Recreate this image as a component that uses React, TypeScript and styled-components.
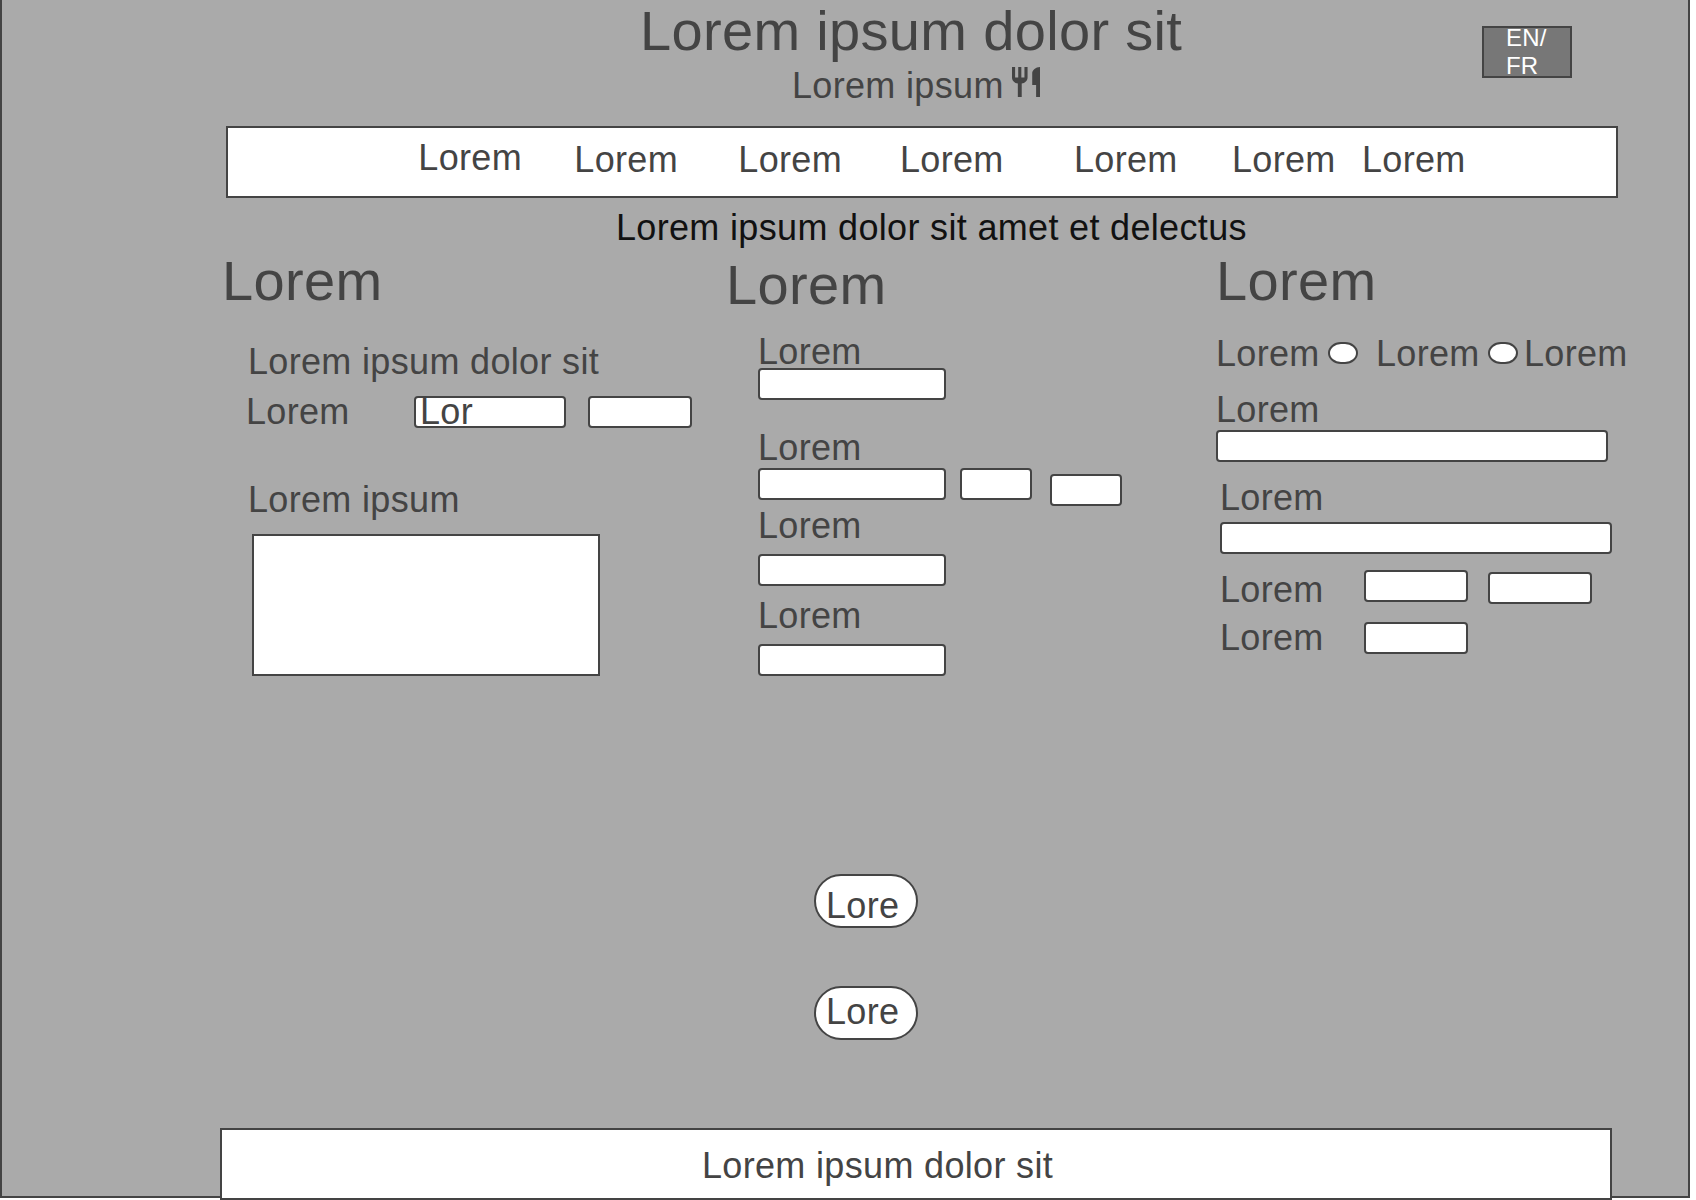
import React from "react";
import styled, { createGlobalStyle } from "styled-components";

const INK = "#444444";

const GlobalStyle = createGlobalStyle`
  *, *::before, *::after { box-sizing: border-box; }
  body {
    margin: 0;
    min-height: 1200px;
    background: #ffffff;
    color: ${INK};
    font-family: "Liberation Sans", Arial, sans-serif;
    font-size: 36px;
    line-height: 33px;
    letter-spacing: 0.33px;
  }
`;

const Page = styled.div`
  display: flex;
  flex-direction: column;
  width: 1690px;
  height: 1198px;
  background: #aaaaaa;
  border: 2px solid ${INK};
  border-top: 0;
  white-space: nowrap;

  & > * {
    flex-shrink: 0;
  }
`;

const Header = styled.header`
  display: flex;
  align-items: flex-start;
  justify-content: space-between;
  height: 126px;
  padding: 0 116px 0 638px;
`;

const Title = styled.h1`
  margin: 0;
  font-size: 56px;
  font-weight: 400;
  line-height: 61px;
`;

const Subtitle = styled.div`
  display: flex;
  margin: 8px 0 0 152px;
`;

const CutleryIcon = styled.svg`
  width: 28px;
  height: 30px;
  margin: -2px 0 0 8.7px;
  fill: ${INK};
`;

const LanguageSwitch = styled.button`
  width: 90px;
  height: 52px;
  margin: 26px 0 0;
  padding: 0 0 0 22px;
  border: 2px solid ${INK};
  background: #777777;
  color: #ffffff;
  font: 24px/28px "Liberation Sans", Arial, sans-serif;
  letter-spacing: 0.2px;
  text-align: left;
  display: flex;
  flex-direction: column;
  justify-content: center;
`;

const Bar = styled.div`
  width: 1392px;
  height: 72px;
  border: 2px solid ${INK};
  background: #ffffff;
`;

const Nav = styled(Bar).attrs({ as: "nav" })`
  display: grid;
  grid-template-columns: 156px 164px 161.7px 174px 158px 130px auto;
  align-items: start;
  margin-left: 224px;
  padding: 9px 0 0 190.3px;
  line-height: 41px;
`;

const NavItem = styled.a<{ $raised?: boolean }>`
  padding-top: ${(p) => (p.$raised ? 0 : 2)}px;
`;

const Tagline = styled.p`
  margin: 13px 0 4px 614px;
  color: #111111;
`;

const Columns = styled.main`
  display: grid;
  grid-template-columns: 504px 490px 1fr;
  align-items: start;
  height: 626px;
  padding-left: 220px;
`;

const Column = styled.section<{ $top: number }>`
  display: flex;
  flex-direction: column;
  align-items: flex-start;
  padding-top: ${(p) => p.$top}px;
`;

const Heading = styled.h2`
  margin: 0;
  font-size: 56px;
  font-weight: 400;
  line-height: 63px;
`;

const Label = styled.label<{ $top?: number; $left?: number }>`
  margin: ${(p) => p.$top ?? 0}px 0 0 ${(p) => p.$left ?? 0}px;
`;

const Field = styled.div<{ $w: number; $top?: number; $left?: number }>`
  width: ${(p) => p.$w}px;
  height: 32px;
  margin: ${(p) => p.$top ?? 0}px 0 0 ${(p) => p.$left ?? 0}px;
  padding-left: 4px;
  border: 2px solid ${INK};
  border-radius: 4px;
  background: #ffffff;
  line-height: 27px;
`;

const TextArea = styled.div`
  width: 348px;
  height: 142px;
  margin: 18px 0 0 30px;
  border: 2px solid ${INK};
  background: #ffffff;
`;

const Row = styled.div<{ $cols: string; $top: number; $left?: number }>`
  display: grid;
  grid-template-columns: ${(p) => p.$cols};
  align-items: start;
  margin: ${(p) => p.$top}px 0 0 ${(p) => p.$left ?? 0}px;
`;

const Radio = styled.span`
  width: 30px;
  height: 22px;
  margin-top: 5px;
  border: 2px solid ${INK};
  border-radius: 13px / 11px;
  background: #ffffff;
`;

const Actions = styled.div`
  display: flex;
  flex-direction: column;
  gap: 58px;
  height: 254px;
  padding-left: 812px;
`;

const Pill = styled.button<{ $textTop: number }>`
  display: flex;
  align-items: flex-start;
  width: 104px;
  height: 54px;
  padding: ${(p) => p.$textTop}px 0 0 10px;
  border: 2px solid ${INK};
  border-radius: 27px;
  background: #ffffff;
  color: ${INK};
  font: inherit;
  letter-spacing: inherit;
`;

const Footer = styled(Bar).attrs({ as: "footer" })`
  margin-left: 218px;
  padding: 19px 0 0 480px;
`;

export default function App() {
  return (
    <>
      <GlobalStyle />
      <Page>
        <Header>
          <div>
            <Title>Lorem ipsum dolor sit</Title>
            <Subtitle>
              <span>Lorem ipsum</span>
              <CutleryIcon viewBox="3 2 18 20" preserveAspectRatio="none">
                <path d="M11 9H9V2H7v7H5V2H3v7c0 2.120 1.660 3.840 3.750 3.970V22h2.500v-9.030C11.340 12.840 13 11.120 13 9V2h-2v7zm5-3v8h2.500v8H21V2c-2.760 0-5 2.240-5 4z" />
              </CutleryIcon>
            </Subtitle>
          </div>
          <LanguageSwitch>
            <span>EN/</span>
            <span>FR</span>
          </LanguageSwitch>
        </Header>

        <Nav>
          <NavItem $raised>Lorem</NavItem>
          {Array.from({ length: 6 }, (_, i) => (
            <NavItem key={i}>Lorem</NavItem>
          ))}
        </Nav>

        <Tagline>Lorem ipsum dolor sit amet et delectus</Tagline>

        <Columns>
          <Column $top={1}>
            <Heading>Lorem</Heading>
            <Label $top={33} $left={26}>Lorem ipsum dolor sit</Label>
            <Row $top={17} $left={24} $cols="168px 174px auto">
              <Label>Lorem</Label>
              <Field $w={152} $top={1}>Lor</Field>
              <Field $w={104} $top={1} />
            </Row>
            <Label $top={55} $left={26}>Lorem ipsum</Label>
            <TextArea />
          </Column>

          <Column $top={5}>
            <Heading>Lorem</Heading>
            <Label $top={19} $left={32}>Lorem</Label>
            <Field $w={188} $left={32} />
            <Label $top={31} $left={32}>Lorem</Label>
            <Row $top={4} $left={32} $cols="202px 90px auto">
              <Field $w={188} />
              <Field $w={72} />
              <Field $w={72} $top={6} />
            </Row>
            <Label $top={3} $left={32}>Lorem</Label>
            <Field $w={188} $top={12} $left={32} />
            <Label $top={13} $left={32}>Lorem</Label>
            <Field $w={188} $top={12} $left={32} />
          </Column>

          <Column $top={1}>
            <Heading>Lorem</Heading>
            <Row $top={25} $cols="112px 48px 112px 36px auto">
              <Label>Lorem</Label>
              <Radio />
              <Label>Lorem</Label>
              <Radio />
              <Label>Lorem</Label>
            </Row>
            <Label $top={23}>Lorem</Label>
            <Field $w={392} $top={4} />
            <Label $top={19} $left={4}>Lorem</Label>
            <Field $w={392} $top={8} $left={4} />
            <Row $top={16} $left={4} $cols="144px 124px auto">
              <Label $top={3}>Lorem</Label>
              <Field $w={104} />
              <Field $w={104} $top={2} />
            </Row>
            <Row $top={15} $left={4} $cols="144px auto">
              <Label>Lorem</Label>
              <Field $w={104} $top={1} />
            </Row>
          </Column>
        </Columns>

        <Actions>
          <Pill $textTop={13}>Lore</Pill>
          <Pill $textTop={7}>Lore</Pill>
        </Actions>

        <Footer>Lorem ipsum dolor sit</Footer>
      </Page>
    </>
  );
}
